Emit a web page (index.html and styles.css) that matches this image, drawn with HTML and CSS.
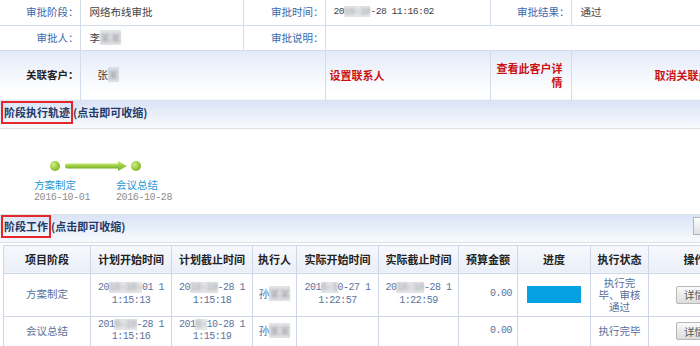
FILE: index.html
```html
<!DOCTYPE html>
<html lang="zh-CN">
  <head>
    <meta charset="UTF-8" />
    <title>审批详情</title>
    <link rel="stylesheet" href="styles.css">
  </head>
  <body>
    <div class="page">
      <!-- 审批信息 -->
      <table class="info">
        <colgroup>
          <col style="width: 80px" />
          <col style="width: 163px" />
          <col style="width: 82px" />
          <col style="width: 165px" />
          <col style="width: 81px" />
          <col style="width: 169px" />
        </colgroup>
        <tr class="info-row">
          <td class="info-label">审批阶段：</td>
          <td class="info-value">网络布线审批</td>
          <td class="info-label">审批时间：</td>
          <td class="info-value num">20<span class="mask">16-10</span>-28 11:16:02</td>
          <td class="info-label">审批结果：</td>
          <td class="info-value">通过</td>
        </tr>
        <tr class="info-row">
          <td class="info-label">审批人：</td>
          <td class="info-value">李<span class="mask">某某</span></td>
          <td class="info-label">审批说明：</td>
          <td class="info-value" colspan="3"></td>
        </tr>
        <tr class="cust-row">
          <td class="info-label cust-label">关联客户：</td>
          <td class="cust-name" colspan="2">张<span class="mask">某</span></td>
          <td class="cust-link">设置联系人</td>
          <td class="cust-link right">查看此客户详情</td>
          <td class="cust-link right">取消关联此客户</td>
        </tr>
      </table>

      <!-- 阶段执行轨迹 -->
      <div class="sec-head">
        <div><span class="mark">阶段执行轨迹</span>(点击即可收缩)</div>
      </div>
      <div class="track">
        <div class="track-line">
          <span class="dot"></span>
          <svg class="arrow" width="62" height="12" viewBox="0 0 62 12">
            <defs>
              <linearGradient id="arrowGrad" x1="0" y1="0" x2="0" y2="1">
                <stop offset="0" stop-color="#c2e86a" />
                <stop offset="1" stop-color="#78ae22" />
              </linearGradient>
            </defs>
            <rect x="0" y="3.5" width="55" height="5" rx="2.5" fill="url(#arrowGrad)" />
            <path d="M53 1 L62 6 L53 11 Z" fill="url(#arrowGrad)" />
          </svg>
          <span class="dot"></span>
        </div>
        <div class="steps">
          <div class="step">
            <div class="step-name">方案制定</div>
            <div class="step-date">2016-10-01</div>
          </div>
          <div class="step">
            <div class="step-name">会议总结</div>
            <div class="step-date">2016-10-28</div>
          </div>
        </div>
      </div>

      <!-- 阶段工作 -->
      <div class="sec-head sec-head-tools">
        <div><span class="mark">阶段工作</span>(点击即可收缩)</div>
        <button class="btn-small">新增</button>
      </div>
      <table class="work">
        <colgroup>
          <col style="width: 87px" />
          <col style="width: 81px" />
          <col style="width: 81px" />
          <col style="width: 44px" />
          <col style="width: 82px" />
          <col style="width: 80px" />
          <col style="width: 59px" />
          <col style="width: 73px" />
          <col style="width: 58px" />
          <col style="width: 92px" />
        </colgroup>
        <thead>
          <tr>
            <th>项目阶段</th>
            <th>计划开始时间</th>
            <th>计划截止时间</th>
            <th>执行人</th>
            <th>实际开始时间</th>
            <th>实际截止时间</th>
            <th>预算金额</th>
            <th>进度</th>
            <th>执行状态</th>
            <th>操作</th>
          </tr>
        </thead>
        <tbody>
          <tr class="row-tall">
            <td>方案制定</td>
            <td class="num">20<span class="mask">16-10-</span>01 11:15:13</td>
            <td class="num">20<span class="mask">16-10</span>-28 11:15:18</td>
            <td>孙<span class="mask">某某</span></td>
            <td class="num">201<span class="mask">6-1</span>0-27 11:22:57</td>
            <td class="num">20<span class="mask">16-10</span>-28 11:22:59</td>
            <td class="num money">0.00</td>
            <td><div class="progress"></div></td>
            <td class="status">执行完毕、审核通过</td>
            <td><button class="btn-detail">详情</button></td>
          </tr>
          <tr>
            <td>会议总结</td>
            <td class="num">201<span class="mask">6-10</span>-28 11:15:16</td>
            <td class="num">201<span class="mask">6-</span>10-28 11:15:19</td>
            <td>孙<span class="mask">某某</span></td>
            <td></td>
            <td></td>
            <td class="num money">0.00</td>
            <td></td>
            <td class="status">执行完毕</td>
            <td><button class="btn-detail">详情</button></td>
          </tr>
        </tbody>
      </table>
    </div>
  </body>
</html>
```

FILE: styles.css
```css
/* 基础样式 */
* {
  margin: 0;
  padding: 0;
  box-sizing: border-box;
}

body {
  font-family: "Noto Sans CJK SC", "Liberation Sans", sans-serif;
  font-size: 10.5px;
  color: #333;
  background-color: #fff;
  overflow: hidden;
}

.page {
  width: 740px;
}

table {
  border-collapse: collapse;
  table-layout: fixed;
}

.num {
  font-family: "Liberation Mono", "Noto Sans CJK SC", monospace;
  font-size: 10px;
  letter-spacing: -0.5px;
}

/* 打码部分 */
.mask {
  color: transparent;
  background-color: rgba(205, 207, 212, 0.55);
  text-shadow: 0 0 3px rgba(130, 130, 140, 0.7);
}

/* 审批信息 */
.info {
  width: 740px;
}

.info td {
  border: 1px solid #d3dcea;
  line-height: 14px;
}

.info tr:first-child td {
  border-top: none;
}

.info td:first-child {
  border-left: none;
}

.info-row td {
  height: 25px;
}

.info-label {
  text-align: right;
  padding-right: 1px;
  color: #3d68ad;
}

.info-value {
  padding-left: 9px;
  color: #444;
}

.info-value.num {
  font-size: 9.8px;
  letter-spacing: -0.6px;
  padding-left: 8px;
}

.cust-row td {
  height: 50px;
  background: linear-gradient(#e3eaf8, #ffffff 85%);
  border-bottom-color: #dfe5ee;
}

.cust-label {
  font-weight: bold;
  color: #222;
}

.cust-name {
  padding-left: 17px;
  color: #333;
}

.cust-link {
  padding: 0 4px;
  color: #cc1111;
  font-weight: bold;
  font-size: 11px;
  line-height: 22px;
}

.cust-link.right {
  text-align: right;
  padding-right: 8px;
}

/* 区块标题 */
.sec-head {
  height: 28px;
  display: flex;
  align-items: center;
  justify-content: space-between;
  padding-left: 1px;
  background: linear-gradient(#dae4f7, #f8fafd);
  border-bottom: 1px solid #dce2ea;
  font-weight: bold;
  font-size: 11px;
  color: #233a68;
}

.mark {
  display: inline-block;
  border: 2px solid #e5262a;
  padding: 1px 1px 2px 1px;
  line-height: 16px;
  margin-top: -4px;
}

.btn-small {
  width: 40px;
  height: 18px;
  margin-right: 7px;
  margin-top: -4px;
  border: 1px solid #b5b5b5;
  background: linear-gradient(#fdfdfd, #e0e0e0);
  font-family: inherit;
  font-size: 10.5px;
  color: #555;
}

/* 执行轨迹 */
.track {
  height: 85px;
  padding-top: 31px;
}

.track-line {
  display: flex;
  align-items: center;
  gap: 5px;
  padding-left: 50px;
  height: 12px;
}

.track-line .arrow {
  margin-right: -1px;
}

.dot {
  width: 10px;
  height: 10px;
  border-radius: 50%;
  background: radial-gradient(circle at 35% 35%, #cdef86, #8cc232 60%, #6c9e1e);
}

.steps {
  display: flex;
  padding-left: 34px;
  margin-top: 6px;
}

.step {
  width: 82px;
}

.step-name {
  color: #1b98d8;
  font-size: 10.5px;
  line-height: 14px;
}

.step-date {
  font-family: "Liberation Mono", monospace;
  font-size: 10px;
  letter-spacing: -0.4px;
  color: #8e8e8e;
  line-height: 12px;
}

.sec-head-tools {
  border-top: 1px solid #dfe6e4;
  height: 29px;
}

/* 阶段工作表 */
.work {
  width: 737px;
  margin: 2px 0 0 3px;
}

.work th,
.work td {
  border: 1px solid #cdd7e6;
  text-align: center;
  vertical-align: middle;
}

.work th {
  height: 28px;
  background: linear-gradient(#f6f8fc, #eaeff8);
  font-size: 11px;
  font-weight: bold;
  color: #222;
}

.work td {
  height: 30px;
  padding: 0 5px;
  color: #56709c;
  line-height: 12.5px;
}

.work .row-tall td {
  height: 43px;
}

.work td.num {
  word-break: break-all;
  color: #5a73a0;
}

.work td.money {
  text-align: right;
  padding-right: 5px;
}

.work td.status {
  padding: 0 3px;
  line-height: 12px;
}

.progress {
  width: 54px;
  height: 17px;
  margin: 0 auto;
  background-color: #05a1e3;
}

.btn-detail {
  width: 38px;
  height: 18px;
  border: 1px solid #b8b8b8;
  border-radius: 2px;
  background: linear-gradient(#fafafa, #dcdcdc);
  font-family: inherit;
  font-size: 10.5px;
  color: #555;
}
```
